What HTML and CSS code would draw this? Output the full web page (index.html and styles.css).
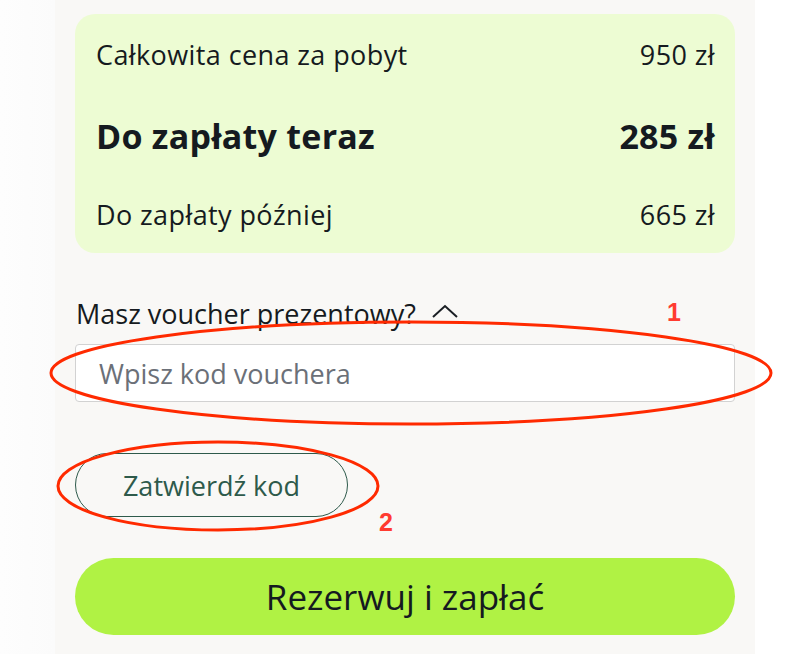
FILE: index.html
```html
<!DOCTYPE html>
<html lang="pl">
<head>
<meta charset="utf-8">
<link rel="stylesheet" href="styles.css">
</head>
<body>
<div class="page">
  <div class="panel">
    <div class="summary">
      <div class="row row-total"><span>Całkowita cena za pobyt</span><span>950 zł</span></div>
      <div class="row row-now"><span>Do zapłaty teraz</span><span>285 zł</span></div>
      <div class="row row-later"><span>Do zapłaty później</span><span>665 zł</span></div>
    </div>
    <div class="voucher-toggle">
      <span>Masz voucher prezentowy?</span>
      <svg class="chev" width="26" height="14" viewBox="0 0 26 14"><polyline points="1,13 13,2 25,13" fill="none" stroke="#1a1f24" stroke-width="2"/></svg>
    </div>
    <div class="voucher-input">Wpisz kod vouchera</div>
    <div class="confirm-wrap"><button class="confirm">Zatwierdź kod</button></div>
    <button class="pay">Rezerwuj i zapłać</button>
  </div>
  <svg class="annot" width="808" height="654" viewBox="0 0 808 654">
    <ellipse cx="411" cy="373" rx="360" ry="51" fill="none" stroke="#ff2a00" stroke-width="3"/>
    <ellipse cx="218" cy="486" rx="160" ry="44" fill="none" stroke="#ff2a00" stroke-width="3"/>
    <text x="667" y="321" class="num">1</text>
    <text x="379" y="531" class="num">2</text>
  </svg>
</div>
</body>
</html>
```
FILE: styles.css
```css
* { box-sizing: border-box; }
html, body { margin: 0; padding: 0; background: #ffffff; }
body { font-family: "Open Sans", "Noto Sans", sans-serif; color: #151a20; }
.page { position: relative; width: 808px; height: 654px; overflow: hidden; background: linear-gradient(to right, #fdfdfd 0, #fbfbfb 55px, #ffffff 55px); }
.panel { margin-left: 55px; width: 700px; height: 654px; background: #f9f8f6; padding: 14px 20px 0 20px; }
.summary { background: #edfcd3; border-radius: 20px; height: 239px; padding: 24px 20px 0 21px; }
.row { display: flex; justify-content: space-between; align-items: center; line-height: 1; }
.row-total { height: 32px; font-size: 27px; letter-spacing: 0.4px; }
.row-now { height: 40px; margin-top: 46px; font-size: 34px; font-weight: 700; letter-spacing: 0.25px; }
.row-later { height: 32px; margin-top: 42px; font-size: 27px; letter-spacing: 0.4px; }
.voucher-toggle { display: flex; align-items: center; gap: 16px; margin-top: 44px; height: 32px; font-size: 27px; line-height: 1; padding-left: 1px; }
.chev { margin-top: -4px; }
.voucher-input { margin-top: 15px; height: 58px; background: #ffffff; border: 1.5px solid #d2d2d2; border-radius: 4px; padding-left: 23px; display: flex; align-items: center; font-size: 27px; color: #6b7078; }
.confirm-wrap { margin-top: 51px; }
.confirm { font-family: inherit; width: 273px; height: 64px; border: 1.5px solid #2e5a4b; border-radius: 32px; background: transparent; color: #2e5a4b; font-size: 27px; padding: 0; }
.pay { display: block; margin-top: 41px; width: 660px; height: 77px; border: 0; border-radius: 39px; background: #b0f244; color: #151a20; font-family: inherit; font-size: 35px; padding: 0; }
.annot { position: absolute; left: 0; top: 0; pointer-events: none; }
.num { font-family: "Liberation Sans", Arial, sans-serif; font-weight: 700; font-size: 25px; fill: #ff3b30; }
```
